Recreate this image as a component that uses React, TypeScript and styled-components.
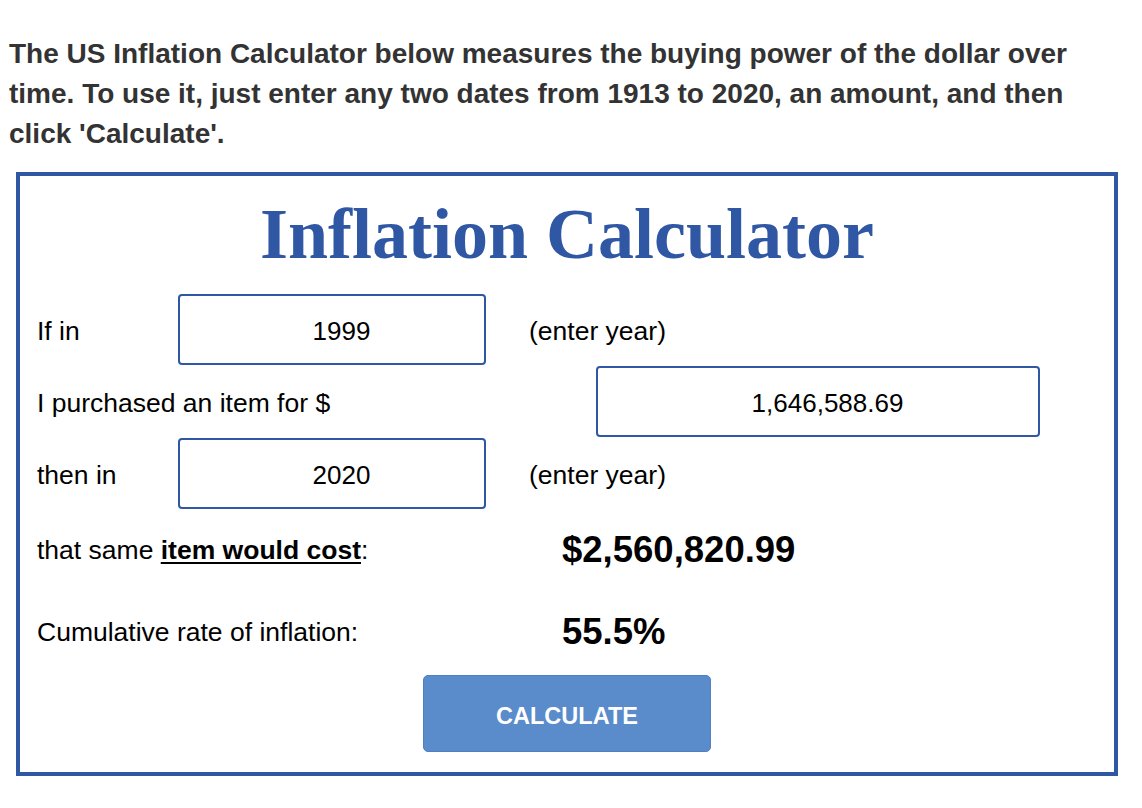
import React, { useState } from 'react';
import styled, { createGlobalStyle } from 'styled-components';

const BLUE = '#2f57a4';

const GlobalStyle = createGlobalStyle`
  body {
    margin: 0;
    background: #fff;
    font-family: "Liberation Sans", Arial, sans-serif;
    color: #000;
  }
`;

const Page = styled.div`
  padding: 34px 8px 0;
`;

const Intro = styled.p`
  margin: 0 0 18px;
  padding-left: 1px;
  max-width: 1080px;
  font-weight: bold;
  font-size: 28px;
  line-height: 40px;
  color: #333;
`;

const Calculator = styled.form`
  box-sizing: border-box;
  width: 1102px;
  margin-left: 8px;
  border: 4px solid ${BLUE};
  padding: 22px 17px 20px;
`;

const Title = styled.h1`
  margin: 0 0 24px;
  text-align: center;
  font-family: "Liberation Serif", "Times New Roman", serif;
  font-weight: bold;
  font-size: 72px;
  line-height: 72px;
  color: ${BLUE};
`;

const Rows = styled.div`
  display: flex;
  flex-direction: column;
  gap: 1px;
`;

const Row = styled.div<{ $h: number }>`
  display: flex;
  align-items: center;
  height: ${(p) => p.$h}px;
`;

const Label = styled.div<{ $w: number }>`
  flex-shrink: 0;
  width: ${(p) => p.$w}px;
  padding-top: 4px;
  font-size: 26.5px;
`;

const Strong = styled.b`
  text-decoration: underline;
  text-underline-offset: 3px;
`;

const Field = styled.input<{ $w: number }>`
  box-sizing: border-box;
  width: ${(p) => p.$w}px;
  height: 71px;
  margin: 0;
  padding: 4px 0 0 19px;
  border: 2px solid ${BLUE};
  border-radius: 4px;
  background: #fff;
  text-align: center;
  font-family: "Liberation Sans", Arial, sans-serif;
  font-size: 26px;
  color: #000;
  outline: none;
`;

const Hint = styled.span`
  margin-left: 43px;
  padding-top: 4px;
  font-size: 26.5px;
`;

const Value = styled.span`
  padding-top: 4px;
  font-weight: bold;
  font-size: 36.5px;
`;

const Actions = styled.div`
  display: flex;
  justify-content: center;
  margin-top: 2px;
`;

const Button = styled.button`
  width: 288px;
  height: 77px;
  padding: 5px 0 0;
  border: 1px solid #4f80c1;
  border-radius: 5px;
  background: #5a8bcb;
  color: #fff;
  font-family: "Liberation Sans", Arial, sans-serif;
  font-weight: bold;
  font-size: 23.5px;
  cursor: pointer;
`;

export default function App() {
  const [fromYear, setFromYear] = useState('1999');
  const [amount, setAmount] = useState('1,646,588.69');
  const [toYear, setToYear] = useState('2020');

  return (
    <>
      <GlobalStyle />
      <Page>
        <Intro>
          The US Inflation Calculator below measures the buying power of the dollar over
          time. To use it, just enter any two dates from 1913 to 2020, an amount, and then
          click 'Calculate'.
        </Intro>
        <Calculator onSubmit={(e) => e.preventDefault()}>
          <Title>Inflation Calculator</Title>
          <Rows>
            <Row $h={71}>
              <Label $w={141}>If in</Label>
              <Field $w={308} value={fromYear} onChange={(e) => setFromYear(e.target.value)} />
              <Hint>(enter year)</Hint>
            </Row>
            <Row $h={71}>
              <Label $w={559}>I purchased an item for $</Label>
              <Field $w={444} value={amount} onChange={(e) => setAmount(e.target.value)} />
            </Row>
            <Row $h={71}>
              <Label $w={141}>then in</Label>
              <Field $w={308} value={toYear} onChange={(e) => setToYear(e.target.value)} />
              <Hint>(enter year)</Hint>
            </Row>
            <Row $h={76}>
              <Label $w={525}>
                that same <Strong>item would cost</Strong>:
              </Label>
              <Value>$2,560,820.99</Value>
            </Row>
            <Row $h={86}>
              <Label $w={525}>Cumulative rate of inflation:</Label>
              <Value>55.5%</Value>
            </Row>
          </Rows>
          <Actions>
            <Button type="submit">CALCULATE</Button>
          </Actions>
        </Calculator>
      </Page>
    </>
  );
}
